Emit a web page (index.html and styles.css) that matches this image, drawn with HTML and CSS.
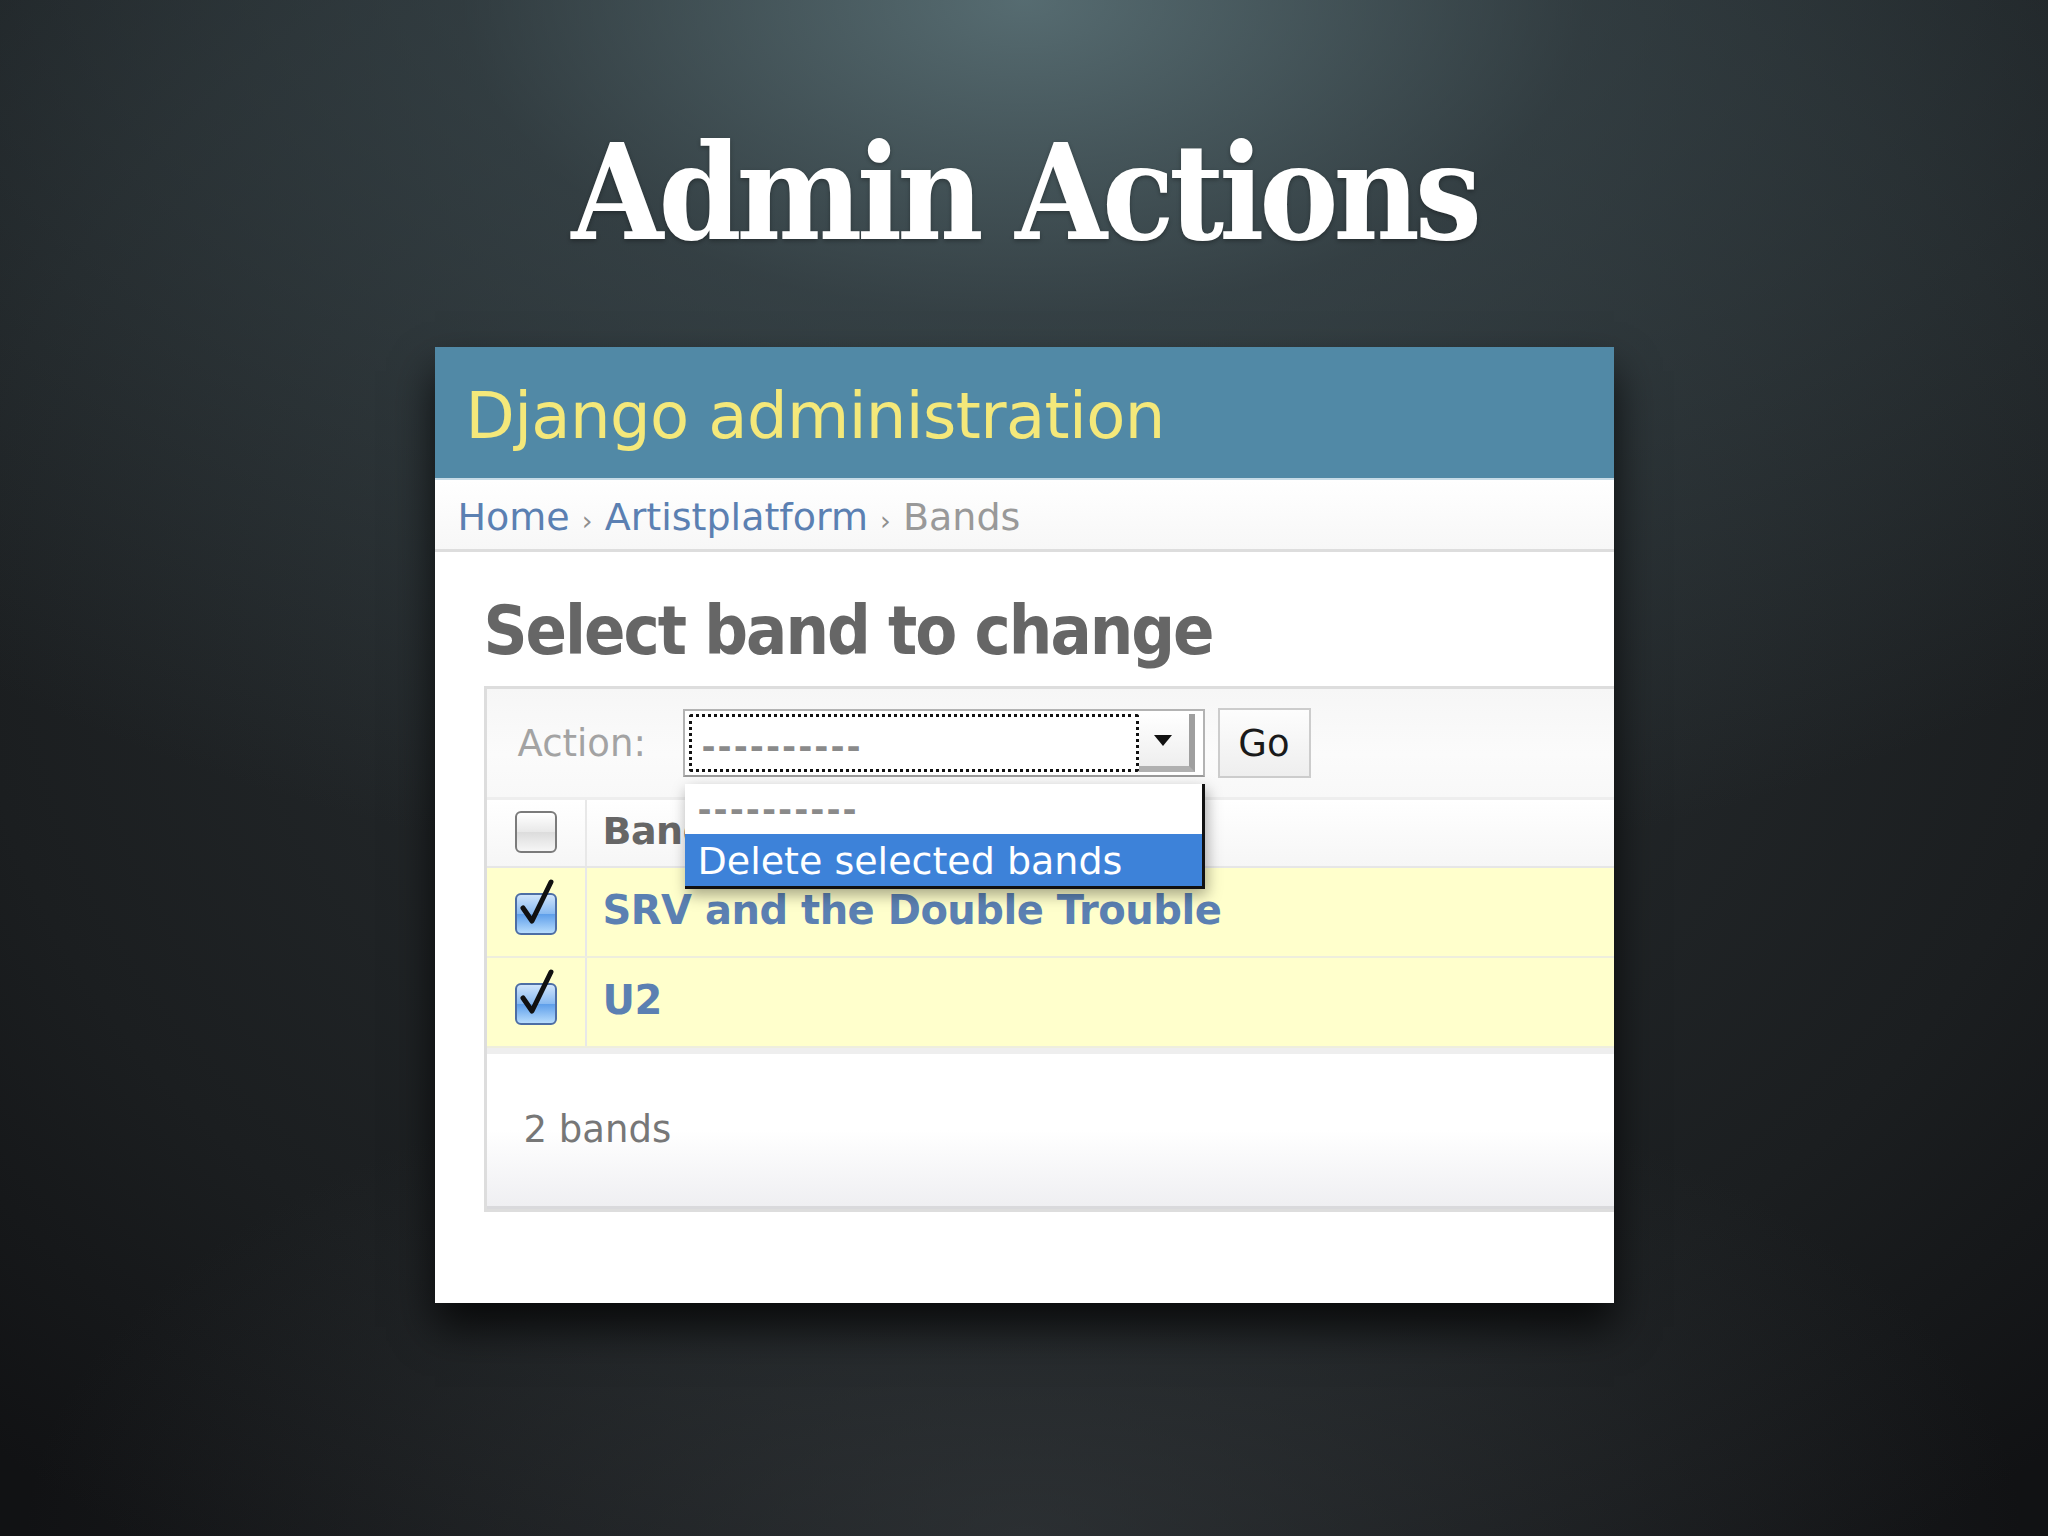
FILE: index.html
```html
<!DOCTYPE html>
<html lang="en">
<head>
    <meta charset="UTF-8">
    <meta name="viewport" content="width=device-width, initial-scale=1.0">
    <title>Admin Actions</title>
    <link rel="stylesheet" href="styles.css">
</head>
<body>
<h1 class="slide-title">Admin Actions</h1>

<div class="admin-window">
    <div class="admin-header">
        <span class="site-name">Django administration</span>
    </div>
    <div class="breadcrumbs">
        <a href="#">Home</a> <span class="sep">›</span> <a href="#">Artistplatform</a> <span class="sep">›</span> Bands
    </div>

    <div class="content">
        <h2 class="page-title">Select band to change</h2>

        <div class="changelist">
            <div class="actions">
                <span class="action-label">Action:</span>
                <div class="select-wrap">
                    <div class="select-box">
                        <span class="select-focus"><span class="dashes">----------</span></span>
                        <span class="select-arrow"></span>
                    </div>
                    <!-- the open dropdown list -->
                    <ul class="select-menu">
                        <li><span class="dashes">----------</span></li>
                        <li class="selected">Delete selected bands</li>
                    </ul>
                </div>
                <button class="go-btn">Go</button>
            </div>

            <div class="result-row head-row">
                <div class="check-col"><span class="checkbox"></span></div>
                <div class="name-col">Band name</div>
            </div>
            <div class="result-row">
                <div class="check-col"><span class="checkbox checked">
                    <svg viewBox="0 0 42 52" width="42" height="52"><path d="M8 30 L17 43 L36 4" fill="none" stroke="#111" stroke-width="5" stroke-linecap="round" stroke-linejoin="round"/></svg>
                </span></div>
                <div class="name-col"><a href="#">SRV and the Double Trouble</a></div>
            </div>
            <div class="result-row">
                <div class="check-col"><span class="checkbox checked">
                    <svg viewBox="0 0 42 52" width="42" height="52"><path d="M8 30 L17 43 L36 4" fill="none" stroke="#111" stroke-width="5" stroke-linecap="round" stroke-linejoin="round"/></svg>
                </span></div>
                <div class="name-col"><a href="#">U2</a></div>
            </div>

            <div class="paginator">2 bands</div>
        </div>
    </div>
</div>
</body>
</html>
```

FILE: styles.css
```css
body {
    margin: 0;
    height: 1536px;
    overflow: hidden;
    display: flex;
    flex-direction: column;
    align-items: center;
    font-family: "DejaVu Sans", "Noto Sans", sans-serif;
    background-color: #17191b;
    background-image:
        radial-gradient(ellipse 1600px 900px at 50% 0%, rgba(100, 126, 132, 0.8) 0%, rgba(70, 88, 94, 0.5) 35%, rgba(30, 36, 38, 0) 100%),
        radial-gradient(ellipse 1000px 500px at 50% 100%, rgba(62, 68, 72, 0.5) 0%, rgba(30, 34, 36, 0) 100%),
        radial-gradient(ellipse 1500px 1150px at 50% 40%, #2a3033 0%, #1b1e20 70%, #111214 100%);
}

.slide-title {
    margin: 118px 0 0;
    height: 229px;
    font-family: "DejaVu Serif", "Liberation Serif", serif;
    font-stretch: condensed;
    font-weight: bold;
    font-size: 132px;
    line-height: 150px;
    color: #ffffff;
    letter-spacing: -5px;
    text-shadow: 0 2px 4px rgba(0, 0, 0, 0.3);
}

/* 截图里的窗口 */
.admin-window {
    width: 1179px;
    height: 956px;
    background: #ffffff;
    overflow: hidden;
    box-shadow: 0 24px 40px rgba(0, 0, 0, 0.75);
}

.admin-header {
    height: 131px;
    background: #5189a6;
    padding-left: 31px;
    box-sizing: border-box;
    display: flex;
    align-items: center;
}

.site-name {
    font-size: 64px;
    color: #f4e87a;
    margin-top: 6px;
    letter-spacing: -0.6px;
}

.breadcrumbs {
    height: 74px;
    box-sizing: border-box;
    padding: 15px 0 0 23px;
    border-top: 2px solid #c7dbe6;
    border-bottom: 3px solid #dddddd;
    background: linear-gradient(#ffffff, #f7f7f7);
    font-size: 38px;
    color: #999999;
}

.breadcrumbs a {
    color: #5b80b2;
    text-decoration: none;
}

.breadcrumbs .sep {
    font-size: 27px;
    color: #8f8f8f;
}

.content {
    padding-left: 49px;
}

.page-title {
    margin: 24px 0 0;
    height: 110px;
    font-size: 68px;
    font-stretch: condensed;
    line-height: 110px;
    letter-spacing: -2px;
    color: #666666;
    font-weight: bold;
}

.changelist {
    width: 1240px;
    border: 3px solid #dddddd;
    border-right: none;
    background: #ffffff;
}

.actions {
    height: 111px;
    box-sizing: border-box;
    padding-left: 31px;
    display: flex;
    align-items: center;
    background: linear-gradient(#f6f6f6, #fbfbfb 60%, #f8f8f8);
    border-bottom: 3px solid #eeeeee;
}

.action-label {
    font-size: 37px;
    color: #a3a3a3;
    width: 165px;
}

.select-wrap {
    position: relative;
}

.select-box {
    width: 522px;
    height: 68px;
    box-sizing: border-box;
    border: 2px solid #b3b3b3;
    border-bottom-color: #9a9a9a;
    background: #ffffff;
    display: flex;
    padding: 3px 8px 3px 4px;
}

.select-focus {
    flex: 1;
    border: 3px dotted #111111;
    border-radius: 3px;
    display: flex;
    align-items: center;
    padding: 6px 0 0 10px;
}

.dashes {
    font-size: 34px;
    color: #8a8a8a;
    letter-spacing: 2px;
    font-weight: bold;
}

.select-arrow {
    width: 50px;
    position: relative;
    border-right: 6px solid #9f9f9f;
    border-bottom: 6px solid #b0b0b0;
    background: linear-gradient(#ffffff, #eeeeee);
}

.select-arrow::after {
    content: "";
    position: absolute;
    left: 15px;
    top: 21px;
    border-left: 9px solid transparent;
    border-right: 9px solid transparent;
    border-top: 11px solid #111111;
}

.select-menu {
    position: absolute;
    left: 2px;
    top: 75px;
    width: 520px;
    margin: 0;
    padding: 0;
    list-style: none;
    background: #ffffff;
    border-right: 3px solid #111111;
    border-bottom: 3px solid #111111;
    box-sizing: border-box;
    box-shadow: 2px 6px 14px rgba(0, 0, 0, 0.35);
    z-index: 5;
}

.select-menu li {
    height: 50px;
    padding-left: 13px;
    display: flex;
    align-items: center;
}

.select-menu li.selected {
    background: #3d82d9;
    color: #ffffff;
    font-size: 38px;
    padding-top: 2px;
}

.go-btn {
    margin-left: 13px;
    width: 93px;
    height: 70px;
    border: 2px solid #cccccc;
    background: linear-gradient(#fdfdfd, #eeeeee);
    font-family: "DejaVu Sans", sans-serif;
    font-size: 37px;
    color: #1a1a1a;
    padding: 0;
}

.result-row {
    height: 90px;
    display: flex;
    background: #ffffcc;
    border-bottom: 2px solid #eeeedd;
    box-sizing: border-box;
    font-size: 40px;
}

.head-row {
    height: 68px;
    font-size: 38px;
    background: linear-gradient(#ffffff, #f6f6f6);
    border-bottom: 2px solid #e6e6e6;
}

.check-col {
    width: 98px;
    border-right: 2px solid #e8e8e8;
    display: flex;
    justify-content: center;
    align-items: center;
}

.name-col {
    padding-left: 16px;
    display: flex;
    align-items: center;
    padding-bottom: 4px;
    font-weight: bold;
    letter-spacing: -0.5px;
}

.head-row .name-col {
    color: #666666;
}

.name-col a {
    color: #5b80b2;
    text-decoration: none;
}

.checkbox {
    width: 38px;
    height: 38px;
    border: 2px solid #7b7b7b;
    border-radius: 6px;
    background: linear-gradient(#ffffff, #e8e8e8 50%, #dcdcdc 51%, #f6f6f6);
    position: relative;
    margin-bottom: 2px;
}

.checkbox.checked {
    border-color: #4d6ea5;
    background: linear-gradient(#cfe4fb, #87b9f1 50%, #5f9fea 51%, #b7dcfd);
    margin-top: 6px;
}

.checkbox svg {
    position: absolute;
    left: -2px;
    top: -17px;
}

.paginator {
    border-top: 6px solid #eeeeee;
    height: 161px;
    box-sizing: border-box;
    padding: 54px 0 0 37px;
    font-size: 37px;
    color: #777777;
    background: linear-gradient(#ffffff 50%, #efeff2);
    border-bottom: 3px solid #d9d9dc;
}
```
